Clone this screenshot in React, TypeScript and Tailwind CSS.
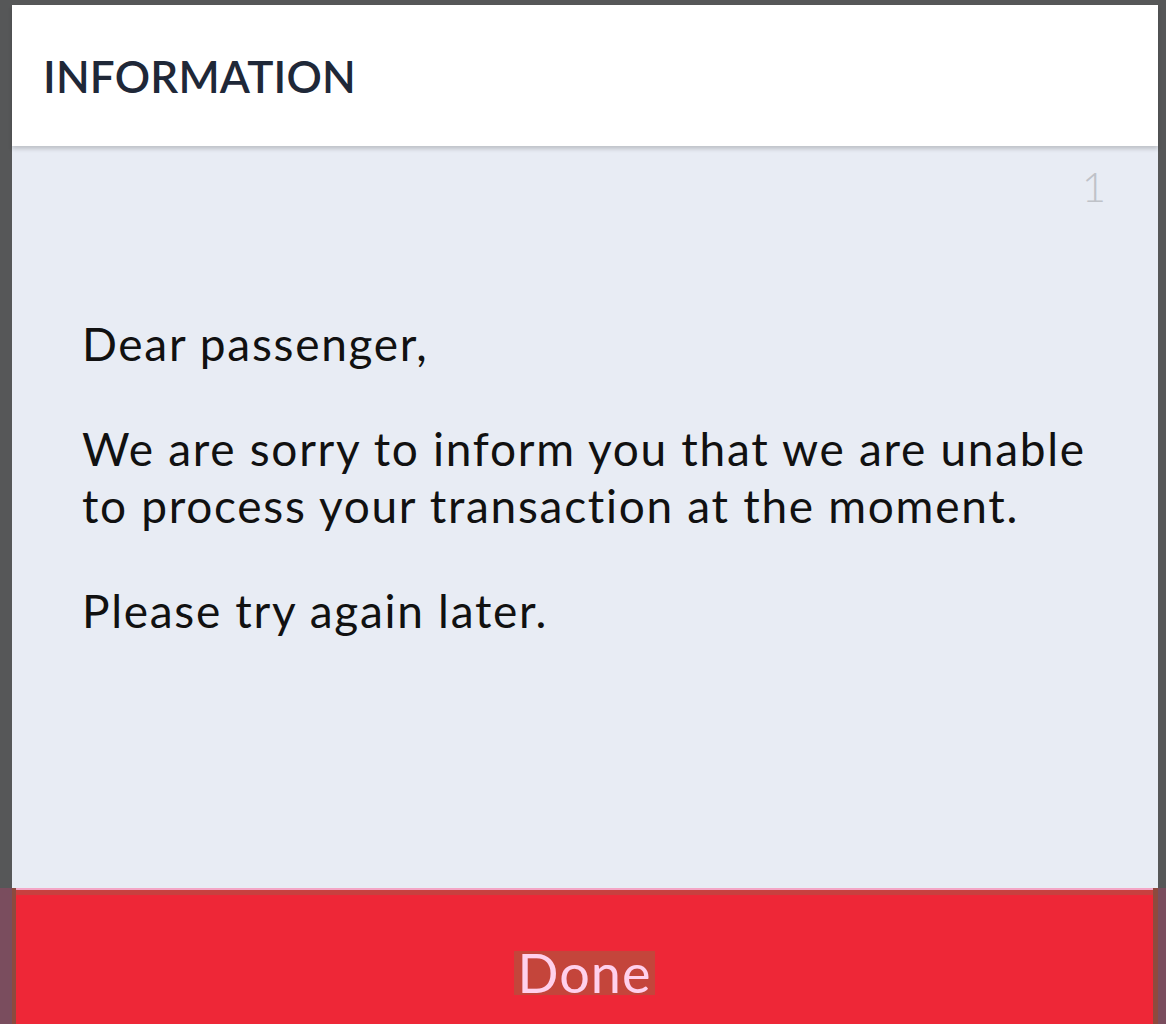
import React from 'react';

const font = { fontFamily: 'Lato, "Open Sans", sans-serif' };

const App: React.FC = () => {
  return (
    <div className="w-[1166px] h-[1024px] bg-[#565758] flex flex-col overflow-hidden" style={font}>
      {/* Dialog panel */}
      <div className="flex-1 flex flex-col pt-[5px] pl-[12px] pr-[8px]">
        <div className="relative z-10 h-[141px] bg-white flex items-center pl-[31px] shadow-[0_3px_4px_rgba(0,0,0,0.18)]">
          <h1 className="text-[44px] font-semibold tracking-[0.2px] text-[#1f2838] leading-none">INFORMATION</h1>
        </div>

        <div className="flex-1 bg-[#e8ecf4] flex flex-col">
          <div className="flex justify-end pr-[52px] pt-[19px]">
            <span className="text-[42px] font-light text-[#bfc2c8] leading-none">1</span>
          </div>
          <div className="pl-[70px] pr-[20px] pt-[108px] text-[46px] leading-[57px] tracking-[1.7px] text-[#111111] space-y-[48px]">
            <p>Dear passenger,</p>
            <p>
              We are sorry to inform you that we are unable
              <br />
              to process your transaction at the moment.
            </p>
            <p>Please try again later.</p>
          </div>
        </div>
      </div>

      {/* Done button */}
      <div className="h-[136px] flex bg-[#ee2737]">
        <div className="w-[12px] bg-[#7a4d5e]" />
        <div className="w-[4px] bg-[#8d4a3e]" />
        <div className="flex-1 flex flex-col">
          <div className="h-[2px] bg-[#f4a6c6]" />
          <div className="h-[5px] bg-[#c8403f]" />
          <div className="flex-1 flex items-center justify-center pt-[26px]">
            <span className="bg-[#c4453b] px-[4px] text-[54px] leading-[44px] tracking-[1px] text-[#ffd0ec]">Done</span>
          </div>
        </div>
        <div className="w-[5px] bg-[#8d4a3e]" />
        <div className="w-[8px] bg-[#7a4d5e]" />
      </div>
    </div>
  );
};

export default App;
